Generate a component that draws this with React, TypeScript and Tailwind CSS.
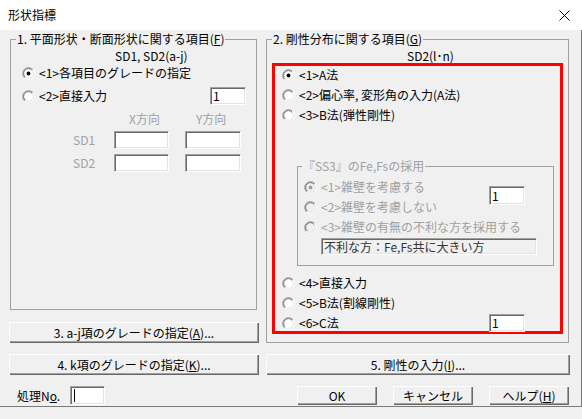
import React from "react";

// 形状指標ダイアログ — classic Win32 look: etched group boxes, 3D buttons, sunken edits.

function Radio({ checked = false, disabled = false }: { checked?: boolean; disabled?: boolean }) {
  return (
    <svg width="13" height="13" viewBox="0 0 13 13" className="shrink-0">
      <defs>
        <linearGradient id="rdo" x1="0" y1="0" x2="1" y2="1">
          <stop offset="0.5" stopColor="#a0a0a0" />
          <stop offset="0.5" stopColor="#ffffff" />
        </linearGradient>
        <linearGradient id="rdi" x1="0" y1="0" x2="1" y2="1">
          <stop offset="0.5" stopColor="#696969" />
          <stop offset="0.5" stopColor="#e3e3e3" />
        </linearGradient>
      </defs>
      <circle cx="6.5" cy="6.5" r="5.9" fill="none" stroke="url(#rdo)" strokeWidth="1" />
      <circle cx="6.5" cy="6.5" r="4.9" fill={disabled ? "#f0f0f0" : "#ffffff"} stroke="url(#rdi)" strokeWidth="1" />
      {checked && <circle cx="6.5" cy="6.5" r="1.9" fill={disabled ? "#a0a0a0" : "#000000"} />}
    </svg>
  );
}

function Edit({ className = "", value = "", disabled = false }: { className?: string; value?: string; disabled?: boolean }) {
  return (
    <div
      className={`flex items-center pl-[2px] border border-[#a0a0a0] border-b-white border-r-white shadow-[inset_1px_1px_#696969,inset_-1px_-1px_#e3e3e3] whitespace-nowrap overflow-hidden ${
        disabled ? "bg-[#f0f0f0]" : "bg-white"
      } ${className}`}
    >
      {value}
    </div>
  );
}

function Btn({ className = "", children }: { className?: string; children: React.ReactNode }) {
  return (
    <div
      className={`flex items-center justify-center bg-[#f0f0f0] shadow-[inset_1px_1px_#ffffff,inset_-1px_-1px_#696969,inset_-2px_-2px_#a0a0a0] whitespace-nowrap ${className}`}
    >
      {children}
    </div>
  );
}

function Opt({ checked, disabled, children, className = "" }: { checked?: boolean; disabled?: boolean; children: React.ReactNode; className?: string }) {
  return (
    <div className={`h-[16px] flex items-center gap-[4px] whitespace-nowrap ${disabled ? "text-[#a0a0a0]" : ""} ${className}`}>
      <Radio checked={checked} disabled={disabled} />
      <span>{children}</span>
    </div>
  );
}

export default function App() {
  return (
    <div className="w-[582px] h-[419px] overflow-hidden bg-[#f0f0f0] text-black text-[12px] leading-[16px] font-['Noto_Sans_CJK_JP','Noto_Sans',sans-serif]">
      {/* タイトルバー */}
      <div className="h-[30px] bg-white flex items-center justify-between pl-[8px] pr-[12px]">
        <span>形状指標</span>
        <svg width="11" height="11" viewBox="0 0 11 11">
          <path d="M0.5 0.5 L10.5 10.5 M10.5 0.5 L0.5 10.5" stroke="#000" strokeWidth="1" />
        </svg>
      </div>

      <div className="h-[377px] border-r border-b border-[#7a7a7a]">
        <div className="flex pt-[2px] pl-[9px]">
          {/* 左カラム */}
          <div className="w-[250px] flex flex-col">
            <fieldset className="ml-[1px] w-[247px] h-[278px] border border-[#a0a0a0]">
              <legend className="ml-[5px] px-[1px] leading-[14px] whitespace-nowrap">
                1. 平面形状・断面形状に関する項目(<u>F</u>)
              </legend>
              <div className="mt-[2px] h-[16px] pl-[104px] whitespace-nowrap">SD1, SD2(a-j)</div>
              <Opt checked className="mt-[1px] pl-[11px]">
                {"<1>各項目のグレードの指定"}
              </Opt>
              <div className="mt-[6px] h-[18px] flex items-center pl-[11px] pr-[10px]">
                <Opt>{"<2>直接入力"}</Opt>
                <Edit className="ml-auto w-[36px] h-[18px]" value="1" />
              </div>
              <div className="mt-[6px] h-[16px] flex pl-[118px] text-[#a0a0a0]">
                <span className="w-[67px]">X方向</span>
                <span>Y方向</span>
              </div>
              <div className="mt-[4px] h-[18px] flex items-center">
                <span className="ml-[62px] w-[41px] text-[#a0a0a0]">SD1</span>
                <Edit className="w-[55px] h-[18px]" />
                <Edit className="ml-[16px] w-[56px] h-[18px]" />
              </div>
              <div className="mt-[5px] h-[18px] flex items-center">
                <span className="ml-[62px] w-[41px] text-[#a0a0a0]">SD2</span>
                <Edit className="w-[55px] h-[18px]" />
                <Edit className="ml-[16px] w-[56px] h-[18px]" />
              </div>
            </fieldset>
            <Btn className="mt-[12px] h-[21px] w-[250px]">
              3. a-j項のグレードの指定(<u>A</u>)...
            </Btn>
          </div>

          {/* 右カラム */}
          <fieldset className="ml-[7px] w-[303px] h-[311px] border border-[#a0a0a0]">
            <legend className="ml-[5px] px-[1px] leading-[14px] whitespace-nowrap">
              2. 剛性分布に関する項目(<u>G</u>)
            </legend>
            <div className="mt-[2px] h-[15px] leading-[15px] pl-[140px] whitespace-nowrap">SD2(l･n)</div>
            <div className="ml-[5px] w-[291px] h-[271px] border-[3px] border-[#ff0000]">
              <Opt checked className="mt-[1px] pl-[7px]">{"<1>A法"}</Opt>
              <Opt className="mt-[4px] pl-[7px]">{"<2>偏心率, 変形角の入力(A法)"}</Opt>
              <Opt className="mt-[4px] pl-[7px]">{"<3>B法(弾性剛性)"}</Opt>

              <fieldset className="mt-[36px] ml-[22px] w-[257px] h-[107px] border border-[#a0a0a0]">
                <legend className="ml-[4px] px-[1px] leading-[14px] whitespace-nowrap text-[#a0a0a0]">
                  『SS3』のFe,Fsの採用
                </legend>
                <div className="flex">
                  <div className="w-[191px] pl-[6px] flex flex-col">
                    <Opt checked disabled className="mt-[6px]">{"<1>雑壁を考慮する"}</Opt>
                    <Opt disabled className="mt-[4px]">{"<2>雑壁を考慮しない"}</Opt>
                    <Opt disabled className="mt-[4px]">{"<3>雑壁の有無の不利な方を採用する"}</Opt>
                  </div>
                  <Edit className="mt-[13px] w-[36px] h-[19px]" value="1" />
                </div>
                <Edit disabled className="mt-[3px] ml-[23px] w-[216px] h-[17px] text-[#333333]" value="不利な方：Fe,Fs共に大きい方" />
              </fieldset>

              <Opt className="mt-[9px] pl-[7px]">{"<4>直接入力"}</Opt>
              <Opt className="mt-[4px] pl-[7px]">{"<5>B法(割線剛性)"}</Opt>
              <div className="mt-[3px] h-[18px] flex items-center pl-[7px] pr-[35px]">
                <Opt>{"<6>C法"}</Opt>
                <Edit className="ml-auto w-[36px] h-[18px]" value="1" />
              </div>
            </div>
          </fieldset>
        </div>

        <div className="flex mt-[11px] pl-[9px]">
          <Btn className="h-[21px] w-[250px]">
            4. k項のグレードの指定(<u>K</u>)...
          </Btn>
          <Btn className="ml-[7px] h-[21px] w-[304px]">
            5. 剛性の入力(<u>I</u>)...
          </Btn>
        </div>

        <div className="flex items-center mt-[11px] pl-[17px] h-[19px]">
          <span className="w-[53px] whitespace-nowrap">
            処理N<u>o</u>.
          </span>
          <div className="w-[35px] h-[19px] flex items-center border border-[#a0a0a0] border-b-white border-r-white shadow-[inset_1px_1px_#696969,inset_-1px_-1px_#e3e3e3] bg-white">
            <span className="ml-[3px] w-px h-[13px] bg-black" />
          </div>
          <Btn className="ml-[192px] w-[80px] h-[19px]">OK</Btn>
          <Btn className="ml-[16px] w-[80px] h-[19px]">キャンセル</Btn>
          <Btn className="ml-[16px] w-[80px] h-[19px]">
            ヘルプ(<u>H</u>)
          </Btn>
        </div>
      </div>
    </div>
  );
}
